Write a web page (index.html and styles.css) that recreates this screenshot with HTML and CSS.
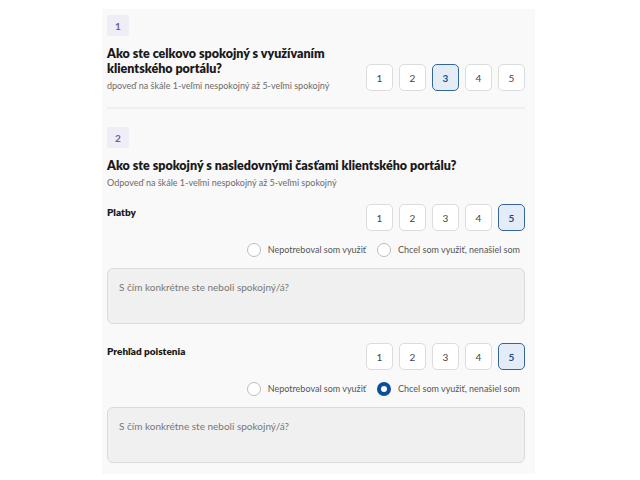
FILE: index.html
```html
<!DOCTYPE html>
<html lang="sk">
  <head>
    <meta charset="UTF-8" />
    <meta name="viewport" content="width=device-width, initial-scale=1.0" />
    <title>Dotazník spokojnosti</title>
    <link rel="stylesheet" href="styles.css">
  </head>
  <body>
    <div class="panel">
      <div class="question">
        <span class="badge">1</span>
        <div class="question-row">
          <div class="question-head">
            <h2 class="question-title">Ako ste celkovo spokojný s využívaním klientského portálu?</h2>
            <p class="question-hint">dpoveď na škále 1-veľmi nespokojný až 5-veľmi spokojný</p>
          </div>
          <div class="scale">
            <button class="scale-btn">1</button>
            <button class="scale-btn">2</button>
            <button class="scale-btn selected">3</button>
            <button class="scale-btn">4</button>
            <button class="scale-btn">5</button>
          </div>
        </div>
      </div>

      <hr class="divider" />

      <div class="question">
        <span class="badge">2</span>
        <h2 class="question-title">Ako ste spokojný s nasledovnými časťami klientského portálu?</h2>
        <p class="question-hint">Odpoveď na škále 1-veľmi nespokojný až 5-veľmi spokojný</p>

        <div class="part">
          <div class="part-row">
            <span class="part-label">Platby</span>
            <div class="scale">
              <button class="scale-btn">1</button>
              <button class="scale-btn">2</button>
              <button class="scale-btn">3</button>
              <button class="scale-btn">4</button>
              <button class="scale-btn selected">5</button>
            </div>
          </div>
          <div class="radios">
            <label class="radio"><span class="radio-dot"></span>Nepotreboval som využiť</label>
            <label class="radio"><span class="radio-dot"></span>Chcel som využiť, nenašiel som</label>
          </div>
          <div class="comment">S čím konkrétne ste neboli spokojný/á?</div>
        </div>

        <div class="part">
          <div class="part-row">
            <span class="part-label">Prehľad poistenia</span>
            <div class="scale">
              <button class="scale-btn">1</button>
              <button class="scale-btn">2</button>
              <button class="scale-btn">3</button>
              <button class="scale-btn">4</button>
              <button class="scale-btn selected">5</button>
            </div>
          </div>
          <div class="radios">
            <label class="radio"><span class="radio-dot"></span>Nepotreboval som využiť</label>
            <label class="radio"><span class="radio-dot checked"></span>Chcel som využiť, nenašiel som</label>
          </div>
          <div class="comment">S čím konkrétne ste neboli spokojný/á?</div>
        </div>
      </div>
    </div>
  </body>
</html>
```

FILE: styles.css
```css
* {
  margin: 0;
  padding: 0;
  box-sizing: border-box;
}

body {
  background: #ffffff;
  font-family: "Lato", "Noto Sans", sans-serif;
  color: #1a1a1a;
}

.panel {
  width: 433px;
  margin: 9px 0 0 102px;
  padding: 6px 10px 11px 5px;
  background-color: #f9f9f9;
}

.badge {
  display: flex;
  justify-content: center;
  align-items: center;
  width: 22px;
  height: 21px;
  border-radius: 3px;
  background-color: #efedf6;
  color: #6e5fa3;
  font-size: 10px;
  font-weight: bold;
}

.question-row {
  display: flex;
  align-items: flex-end;
  gap: 12px;
}

.question-head {
  flex: 1;
}

.question-title {
  margin-top: 10px;
  font-size: 12.5px;
  line-height: 15px;
  font-weight: 800;
  color: #1a1a1a;
}

.question-hint {
  margin-top: 4px;
  font-size: 9px;
  line-height: 11px;
  color: #6b6b6b;
}

.scale {
  display: flex;
  gap: 6px;
  flex-shrink: 0;
}

.scale-btn {
  width: 27px;
  height: 27px;
  border: 1px solid #dcdcdc;
  border-radius: 5px;
  background-color: #ffffff;
  color: #444;
  font-family: "Lato", "Noto Sans", sans-serif;
  font-size: 10px;
}

.scale-btn.selected {
  background-color: #e4edf7;
  border-color: #35669b;
  color: #1f4f86;
  font-weight: bold;
}

.divider {
  margin: 16px 0 18px;
  border: none;
  border-top: 2px solid #efefef;
}

.part {
  margin-top: 16px;
}

.part + .part {
  margin-top: 19px;
}

.part-row {
  display: flex;
  justify-content: space-between;
  align-items: flex-start;
}

.part-label {
  padding-top: 2px;
  font-size: 10px;
  font-weight: 800;
  color: #1a1a1a;
}

.radios {
  display: flex;
  justify-content: flex-end;
  gap: 11px;
  margin-top: 12px;
  padding-right: 5px;
}

.radio {
  display: flex;
  align-items: center;
  gap: 7px;
  font-size: 9px;
  line-height: 14px;
  color: #555;
}

.radio-dot {
  width: 14px;
  height: 14px;
  border: 1px solid #bdbdbd;
  border-radius: 50%;
  background-color: #ffffff;
}

.radio-dot.checked {
  border: 4px solid #0b4f96;
}

.comment {
  margin-top: 11px;
  height: 56px;
  padding: 12px 11px;
  border: 1px solid #dadada;
  border-radius: 6px;
  background-color: #f0f0f0;
  font-size: 10px;
  color: #777;
}
```
